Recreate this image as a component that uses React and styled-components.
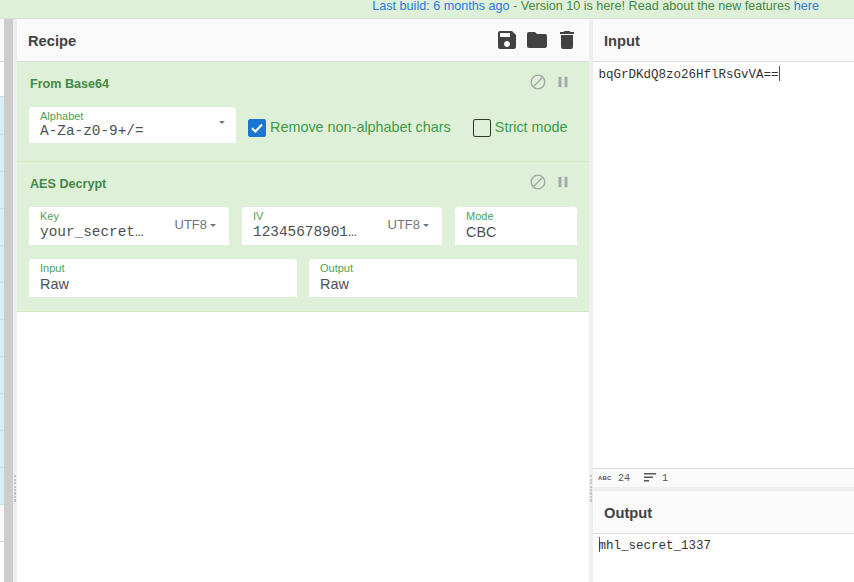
import React from 'react';
import styled, { createGlobalStyle } from 'styled-components';

const GlobalStyle = createGlobalStyle`
  html, body {
    margin: 0;
    padding: 0;
    background: #fff;
    overflow: hidden;
  }

  * {
    box-sizing: border-box;
  }
`;

const sans = `'Liberation Sans', Arial, sans-serif`;
const mono = `'Liberation Mono', 'Courier New', monospace`;

const Page = styled.div`
  display: flex;
  flex-direction: column;
  width: 854px;
  height: 582px;
  overflow: hidden;
  font-family: ${sans};
`;

const Banner = styled.div`
  flex: 0 0 19px;
  padding-right: 35px;
  text-align: right;
  font-size: 12.6px;
  line-height: 12px;
  color: #468847;
  background: #dff0d8;
  border-bottom: 1px solid #ddd;

  a {
    color: #2a7ae2;
    text-decoration: none;
  }
`;

const Workspace = styled.div`
  flex: 1;
  display: flex;
  min-height: 0;
`;

const OpStrip = styled.div`
  flex: 0 0 4px;
  display: flex;
  flex-direction: column;
  overflow: hidden;
`;

const StripHead = styled.div`
  flex: 0 0 43px;
  background: #fafafa;
  border-bottom: 1px solid #ddd;
`;

const StripSearch = styled.div`
  flex: 0 0 35px;
  background: #fff;
  border-bottom: 1px solid #ddd;
`;

const StripOp = styled.div`
  flex: 0 0 ${({ $first }) => ($first ? 38 : 37)}px;
  background: #d9edf7;
  border-bottom: 1px solid #bce8f1;
`;

const StripRest = styled.div`
  flex: 0 0 37px;
  background: #fafafa;
  border-bottom: 1px solid #ddd;
`;

const Scrollbar = styled.div`
  flex: 0 0 9px;
  background: #ccc;
`;

const Gutter = styled.div`
  flex: 0 0 4px;
  display: flex;
  align-items: center;
  justify-content: center;
  background: #eee;
`;

const Grip = styled.div`
  width: 2px;
  height: 28px;
  margin-top: 377px;
  background: repeating-linear-gradient(#c4c4c4 0 2px, transparent 2px 3.5px);
`;

const RecipePane = styled.section`
  flex: 0 0 572px;
  display: flex;
  flex-direction: column;
  background: #fff;
`;

const PaneHeader = styled.header`
  flex: 0 0 43px;
  display: flex;
  align-items: center;
  justify-content: space-between;
  padding: 0 10px 0 11px;
  background: #fafafa;
  border-bottom: 1px solid #ddd;
`;

const PaneTitle = styled.h2`
  margin: 0;
  padding-top: 2px;
  font-size: 14.7px;
  font-weight: 700;
  color: #424242;
`;

const IconRow = styled.div`
  display: flex;
  gap: ${({ $gap }) => $gap}px;
  align-items: center;
  margin-bottom: ${({ $lift }) => $lift || 0}px;
`;

const Icon = styled.svg`
  display: block;
  width: ${({ $size }) => $size}px;
  height: ${({ $size }) => $size}px;
  fill: ${({ $color }) => $color};
`;

const Operation = styled.article`
  flex: 0 0 ${({ $height }) => $height}px;
  display: flex;
  flex-direction: column;
  padding: 12px 12px 0;
  background: #dff0d8;
  border-bottom: 1px solid #d6e9c6;
`;

const OpTitleRow = styled.div`
  display: flex;
  align-items: center;
  justify-content: space-between;
  height: 18px;
  margin-bottom: ${({ $gap }) => $gap}px;
  padding: 0 5px 0 1px;
`;

const OpTitle = styled.h3`
  margin: 0;
  padding-top: 2px;
  font-size: 12.6px;
  font-weight: 700;
  color: #468847;
`;

const FieldRow = styled.div`
  display: flex;
  gap: ${({ $gap }) => $gap || 12}px;
  margin-bottom: 14px;
`;

const Field = styled.div`
  position: relative;
  flex: 0 0 ${({ $width }) => $width}px;
  height: ${({ $height }) => $height || 38}px;
  padding: 3px 11px 0;
  background: #fff;
  border-radius: 4px 4px ${({ $height }) => ($height ? '2px 2px' : '0 0')};
`;

const FieldLabel = styled.label`
  display: block;
  font-size: 11px;
  line-height: 13px;
  color: #4c9f54;
`;

const FieldValue = styled.div`
  font-family: ${({ $mono }) => ($mono ? mono : sans)};
  font-size: 14.4px;
  line-height: ${({ $tight }) => ($tight ? 16 : 18)}px;
  color: #495057;
  white-space: nowrap;
`;

const Caret = styled.span`
  display: inline-block;
  width: 0;
  height: 0;
  border-top: 3.5px solid ${({ $color }) => $color || '#6c757d'};
  border-left: 3.5px solid transparent;
  border-right: 3.5px solid transparent;
`;

const CaretSlot = styled.div`
  position: absolute;
  top: 14px;
  right: 11px;
  display: flex;
`;

const Charset = styled.div`
  position: absolute;
  top: 10px;
  right: 13px;
  display: flex;
  align-items: center;
  gap: 3px;
  font-size: 13px;
  line-height: 16px;
  color: #6c757d;
`;

const OptionRow = styled.div`
  display: flex;
  align-items: flex-start;
  gap: 12px;
`;

const Check = styled.label`
  display: flex;
  align-items: center;
  gap: 4px;
  height: 18px;
  margin-top: 12px;
  margin-right: ${({ $space }) => $space || 0}px;
  font-size: 14.4px;
  white-space: nowrap;
  color: #3f9a48;
`;

const CheckText = styled.span`
  margin-bottom: 2px;
`;

const CheckBox = styled.span`
  display: flex;
  align-items: center;
  justify-content: center;
  width: 18px;
  height: 18px;
  border-radius: 2px;
  background: ${({ $on }) => ($on ? '#1976d2' : 'transparent')};
  border: 1px solid ${({ $on }) => ($on ? '#1976d2' : '#333')};

  svg {
    width: 12px;
    height: 10px;
    fill: none;
    stroke: #fff;
    stroke-width: 2;
  }
`;

const IOColumn = styled.div`
  flex: 1;
  display: flex;
  flex-direction: column;
  min-width: 0;
`;

const TextArea = styled.div`
  flex: ${({ $grow }) => ($grow ? 1 : '0 0 48px')};
  padding: ${({ $grow }) => ($grow ? 4 : 3)}px 5.5px;
  font-family: ${mono};
  font-size: 12.5px;
  line-height: 16px;
  color: #333;
  background: #fff;
  white-space: pre;
`;

const Cursor = styled.span`
  display: inline-block;
  width: 1px;
  height: 15px;
  margin: ${({ $before }) => ($before ? '0 -1px 0 0' : '0')};
  vertical-align: -3px;
  background: #555;
`;

const StatusBar = styled.div`
  flex: 0 0 19px;
  display: flex;
  align-items: center;
  padding-left: 5px;
  font-family: ${mono};
  font-size: 10px;
  color: #555;
  background: #fafafa;
  border-top: 1px solid #ddd;
`;

const AbcBadge = styled.span`
  width: 13px;
  margin-right: 7px;
  font-family: ${sans};
  font-size: 6px;
  font-weight: 700;
  letter-spacing: 0.2px;
`;

const LinesIcon = styled.svg`
  width: 12px;
  height: 10px;
  margin: 0 6px 0 14px;
  fill: #555;
`;

const Divider = styled.div`
  flex: 0 0 4px;
  background: #eee;
`;

const icons = {
  save: 'M17 3H5c-1.11 0-2 .9-2 2v14c0 1.1.89 2 2 2h14c1.1 0 2-.9 2-2V7l-4-4zm-5 16c-1.66 0-3-1.34-3-3s1.34-3 3-3 3 1.34 3 3-1.34 3-3 3zm3-10H5V5h10v4z',
  folder: 'M10 4H4c-1.1 0-1.99.9-1.99 2L2 18c0 1.1.9 2 2 2h16c1.1 0 2-.9 2-2V8c0-1.1-.9-2-2-2h-8l-2-2z',
  trash: 'M6 19c0 1.1.9 2 2 2h8c1.1 0 2-.9 2-2V7H6v12zM19 4h-3.5l-1-1h-5l-1 1H5v2h14V4z',
  block: 'M12 2C6.48 2 2 6.48 2 12s4.48 10 10 10 10-4.48 10-10S17.52 2 12 2zM4 12c0-4.42 3.58-8 8-8 1.85 0 3.55.63 4.9 1.69L5.69 16.9C4.63 15.55 4 13.85 4 12zm8 8c-1.85 0-3.55-.63-4.9-1.69L18.31 7.1C19.37 8.45 20 10.15 20 12c0 4.42-3.58 8-8 8z',
  pause: 'M6 19h4V5H6v14zm8-14v14h4V5h-4z',
};

const MaterialIcon = ({ name, size = 24, color = '#424242' }) => (
  <Icon viewBox="0 0 24 24" $size={size} $color={color}>
    <path d={icons[name]} />
  </Icon>
);

const OpControls = () => (
  <IconRow $gap={7} $lift={2}>
    <MaterialIcon name="block" size={18} color="#aaa" />
    <MaterialIcon name="pause" size={18} color="#aaa" />
  </IconRow>
);

const Option = ({ label, on, space }) => (
  <Check $space={space}>
    <CheckBox $on={on}>
      {on && (
        <svg viewBox="0 0 12 10">
          <path d="M1 5.2 4.4 8.5 11 1.5" />
        </svg>
      )}
    </CheckBox>
    <CheckText>{label}</CheckText>
  </Check>
);

const App = () => (
  <Page>
    <GlobalStyle />
    <Banner>
      <a href="#build">Last build: 6 months ago</a> - Version 10 is here! Read about the new features{' '}
      <a href="#news">here</a>
    </Banner>
    <Workspace>
      <OpStrip>
        <StripHead />
        <StripSearch />
        {Array.from({ length: 11 }, (_, i) => (
          <StripOp key={i} $first={i === 0} />
        ))}
        <StripRest />
      </OpStrip>
      <Scrollbar />
      <Gutter>
        <Grip />
      </Gutter>
      <RecipePane>
        <PaneHeader>
          <PaneTitle>Recipe</PaneTitle>
          <IconRow $gap={6}>
            <MaterialIcon name="save" />
            <MaterialIcon name="folder" />
            <MaterialIcon name="trash" />
          </IconRow>
        </PaneHeader>
        <Operation $height={100}>
          <OpTitleRow $gap={15}>
            <OpTitle>From Base64</OpTitle>
            <OpControls />
          </OpTitleRow>
          <OptionRow>
            <Field $width={207} $height={36}>
              <FieldLabel>Alphabet</FieldLabel>
              <FieldValue $mono $tight>A-Za-z0-9+/=</FieldValue>
              <CaretSlot>
                <Caret $color="#777" />
              </CaretSlot>
            </Field>
            <Option label="Remove non-alphabet chars" on space={10} />
            <Option label="Strict mode" />
          </OptionRow>
        </Operation>
        <Operation $height={148}>
          <OpTitleRow $gap={15}>
            <OpTitle>AES Decrypt</OpTitle>
            <OpControls />
          </OpTitleRow>
          <FieldRow $gap={13}>
            <Field $width={200}>
              <FieldLabel>Key</FieldLabel>
              <FieldValue $mono>your_secret…</FieldValue>
              <Charset>
                UTF8 <Caret />
              </Charset>
            </Field>
            <Field $width={200}>
              <FieldLabel>IV</FieldLabel>
              <FieldValue $mono>12345678901…</FieldValue>
              <Charset>
                UTF8 <Caret />
              </Charset>
            </Field>
            <Field $width={122}>
              <FieldLabel>Mode</FieldLabel>
              <FieldValue>CBC</FieldValue>
            </Field>
          </FieldRow>
          <FieldRow>
            <Field $width={268}>
              <FieldLabel>Input</FieldLabel>
              <FieldValue>Raw</FieldValue>
            </Field>
            <Field $width={268}>
              <FieldLabel>Output</FieldLabel>
              <FieldValue>Raw</FieldValue>
            </Field>
          </FieldRow>
        </Operation>
      </RecipePane>
      <Gutter>
        <Grip />
      </Gutter>
      <IOColumn>
        <PaneHeader>
          <PaneTitle>Input</PaneTitle>
        </PaneHeader>
        <TextArea $grow>
          bqGrDKdQ8zo26HflRsGvVA==
          <Cursor />
        </TextArea>
        <StatusBar>
          <AbcBadge>ABC</AbcBadge>
          24
          <LinesIcon viewBox="0 0 12 10">
            <path d="M0 0h12v1.5H0zM0 3.5h9V5H0zM0 7h5v1.5H0z" />
          </LinesIcon>
          1
        </StatusBar>
        <Divider />
        <PaneHeader>
          <PaneTitle>Output</PaneTitle>
        </PaneHeader>
        <TextArea>
          <Cursor $before />
          mhl_secret_1337
        </TextArea>
      </IOColumn>
    </Workspace>
  </Page>
);

export default App;
